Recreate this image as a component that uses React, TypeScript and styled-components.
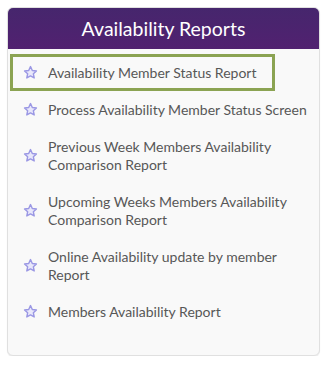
import React from "react";
import styled, { createGlobalStyle } from "styled-components";

const Global = createGlobalStyle`
  html, body { margin: 0; padding: 0; background: #ffffff; }
  body { font-family: Lato, "Open Sans", sans-serif; }
`;

const Card = styled.section`
  margin: 7px 10px 0 7px;
  width: 313px;
  height: 349px;
  box-sizing: border-box;
  background: #f9f9f9;
  border: 1px solid #e0e0e0;
  border-radius: 6px;
  box-shadow: 0 1px 1px rgba(0, 0, 0, 0.08);
  overflow: hidden;
`;

const Header = styled.h2`
  margin: 0;
  height: 41px;
  display: flex;
  align-items: center;
  justify-content: center;
  background: linear-gradient(#46266d, #512170);
  color: #ffffff;
  font-family: Lato, sans-serif;
  font-weight: 400;
  font-size: 19.5px;
`;

const List = styled.ul`
  list-style: none;
  margin: 0;
  padding: 5px 0 0 2px;
  display: flex;
  flex-direction: column;
  align-items: flex-start;
`;

const Item = styled.li<{ $active?: boolean }>`
  display: flex;
  align-items: center;
  gap: 10px;
  width: max-content;
  box-sizing: border-box;
  padding: 6.5px 16px 6.5px 10px;
  border: 3px solid ${(p) => (p.$active ? "#8ba352" : "transparent")};
  color: #575757;
  font-size: 14px;
  line-height: 18px;
`;

const Label = styled.span`
  max-width: 262px;
`;

const StarIcon = () => (
  <svg width="15" height="15" viewBox="0 0 24 24" style={{ flex: "none" }}>
    <path
      d="M12 2.5l2.9 6.2 6.6.8-4.9 4.6 1.3 6.6L12 17.4l-5.9 3.3 1.3-6.6-4.9-4.6 6.6-.8z"
      fill="#e9e8fb"
      stroke="#9b98e4"
      strokeWidth="2.3"
      strokeLinejoin="round"
    />
  </svg>
);

const items = [
  "Availability Member Status Report",
  "Process Availability Member Status Screen",
  "Previous Week Members Availability Comparison Report",
  "Upcoming Weeks Members Availability Comparison Report",
  "Online Availability update by member Report",
  "Members Availability Report",
];

export default function App() {
  return (
    <>
      <Global />
      <Card>
        <Header>Availability Reports</Header>
        <List>
          {items.map((t, i) => (
            <Item key={t} $active={i === 0}>
              <StarIcon />
              <Label>{t}</Label>
            </Item>
          ))}
        </List>
      </Card>
    </>
  );
}
